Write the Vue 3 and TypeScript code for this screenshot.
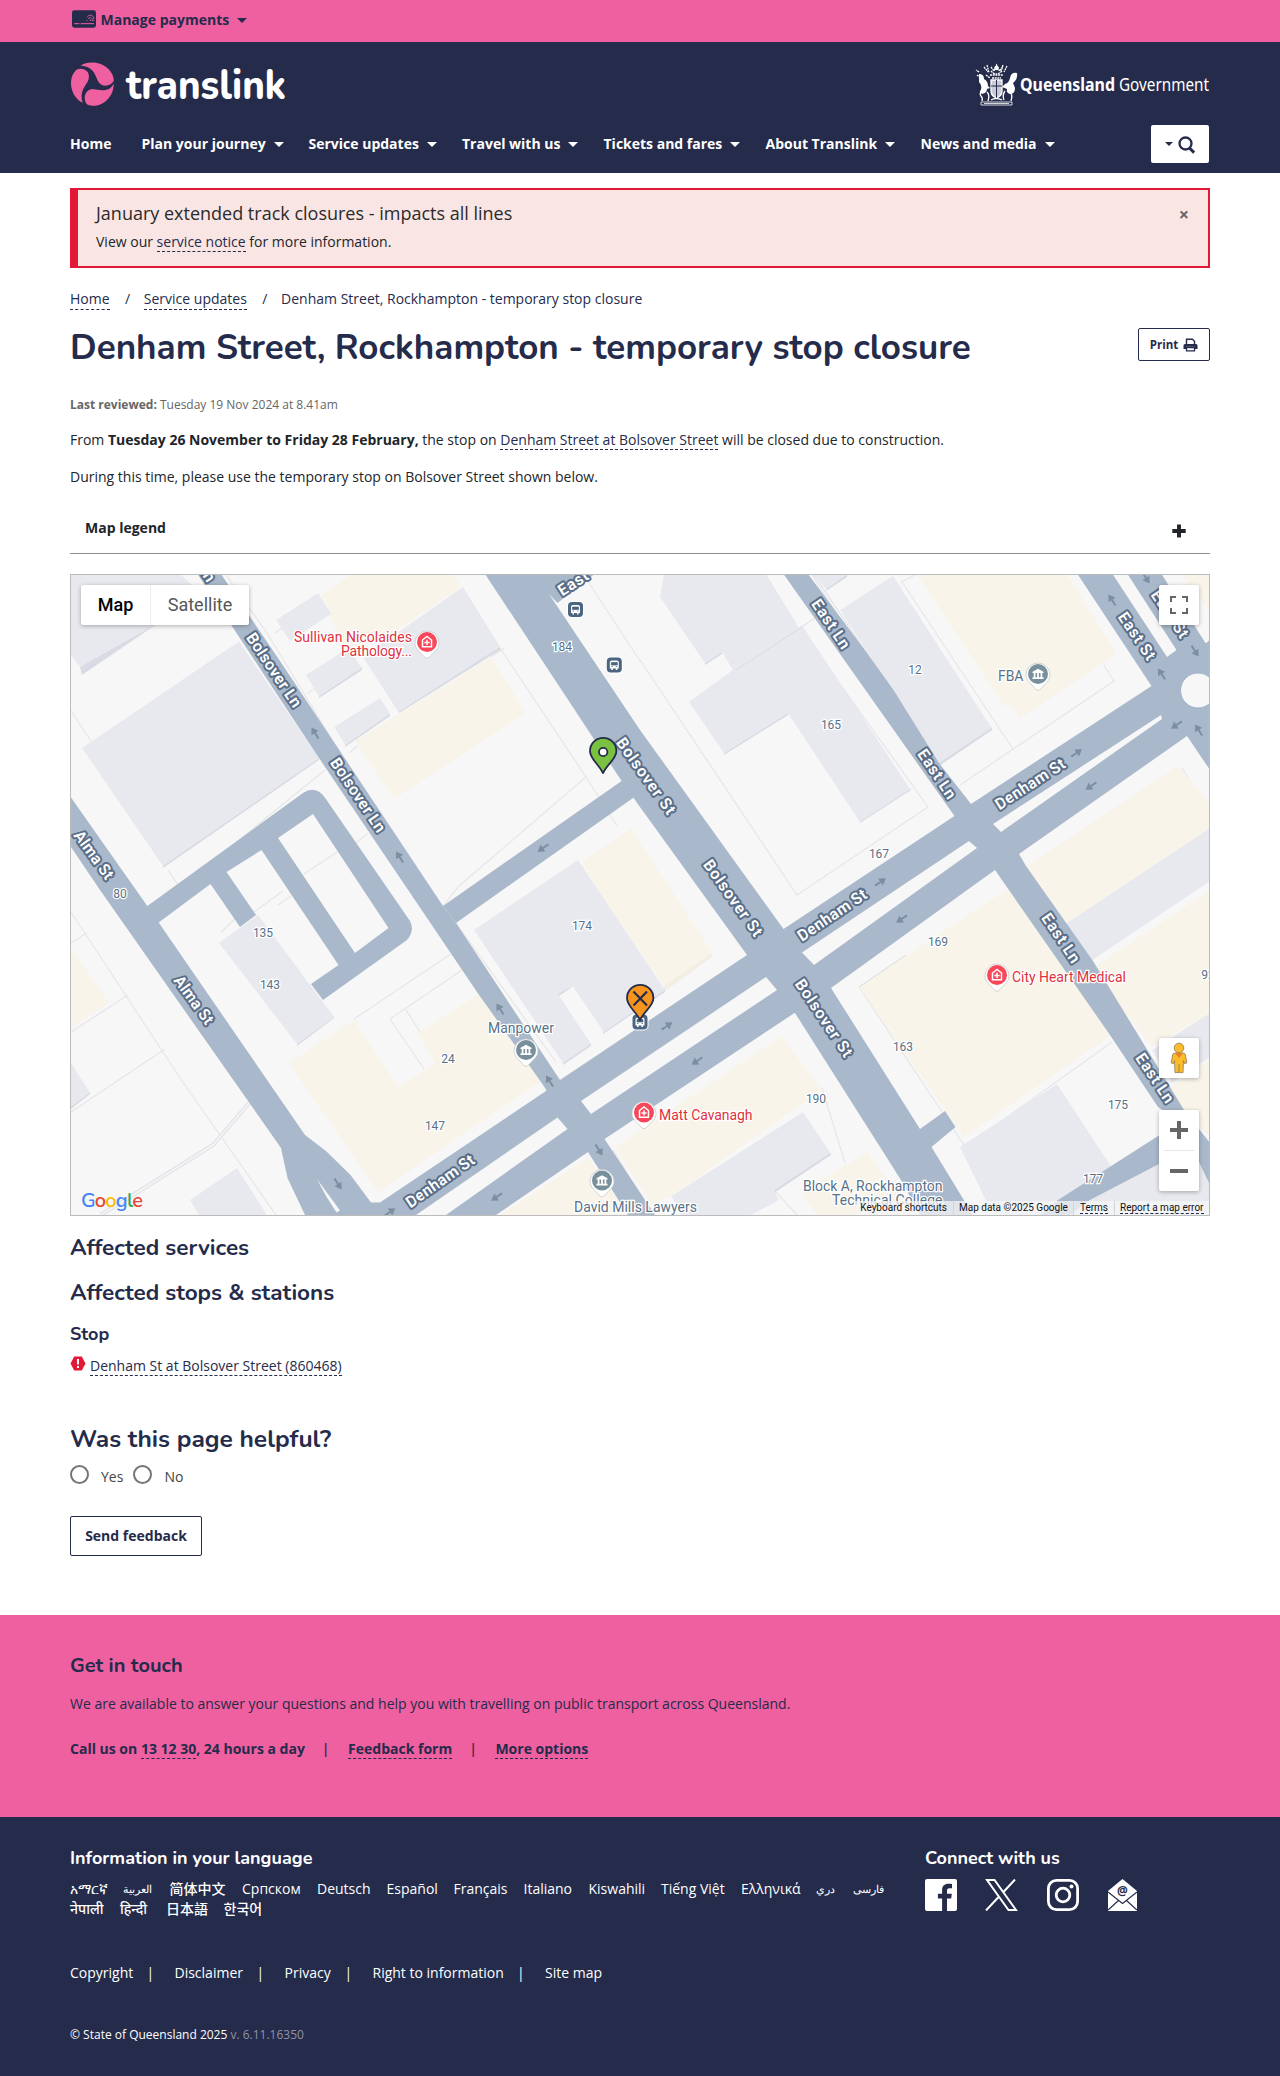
<script setup lang="ts">
interface MapLabel { text: string; x: number; y: number; a: number; w: number }
interface MapPoint { x: number; y: number }

const navItems: { label: string; menu: boolean; width: number }[] = [
  { label: 'Home', menu: false, width: 71.5 },
  { label: 'Plan your journey', menu: true, width: 167 },
  { label: 'Service updates', menu: true, width: 153.5 },
  { label: 'Travel with us', menu: true, width: 141.5 },
  { label: 'Tickets and fares', menu: true, width: 162 },
  { label: 'About Translink', menu: true, width: 155 },
  { label: 'News and media', menu: true, width: 150 },
]

const languageRows: { label: string; width: number; rtl?: boolean }[][] = [
  [
    { label: 'አማርኛ', width: 53 },
    { label: 'العربية', width: 46.5, rtl: true },
    { label: '简体中文', width: 72.5 },
    { label: 'Српском', width: 75 },
    { label: 'Deutsch', width: 69.5 },
    { label: 'Español', width: 67 },
    { label: 'Français', width: 70 },
    { label: 'Italiano', width: 65 },
    { label: 'Kiswahili', width: 72.5 },
    { label: 'Tiếng Việt', width: 80 },
    { label: 'Ελληνικά', width: 75 },
    { label: 'دري', width: 37, rtl: true },
    { label: 'فارسی', width: 40, rtl: true },
  ],
  [
    { label: 'नेपाली', width: 50 },
    { label: 'हिन्दी', width: 46 },
    { label: '日本語', width: 57.5 },
    { label: '한국어', width: 45 },
  ],
]

const roadLabels: MapLabel[] = [
  { text: 'Ln', x: 207, y: 573, a: 56, w: 17 },
  { text: 'Bolsover Ln', x: 274, y: 670, a: 56, w: 86 },
  { text: 'Bolsover Ln', x: 358, y: 795, a: 56, w: 86 },
  { text: 'Bolsover St', x: 646, y: 776, a: 54.5, w: 90 },
  { text: 'Bolsover St', x: 733, y: 898, a: 54.5, w: 90 },
  { text: 'Bolsover St', x: 824, y: 1018, a: 56, w: 90 },
  { text: 'Denham St', x: 1030, y: 784, a: -33, w: 80 },
  { text: 'Denham St', x: 832, y: 915, a: -34, w: 80 },
  { text: 'Denham St', x: 440, y: 1181, a: -35, w: 80 },
  { text: 'Alma St', x: 94, y: 855, a: 54, w: 56 },
  { text: 'Alma St', x: 194, y: 1000, a: 54, w: 56 },
  { text: 'East Ln', x: 831, y: 624, a: 56, w: 56 },
  { text: 'East Ln', x: 937, y: 774, a: 56, w: 56 },
  { text: 'East Ln', x: 1061, y: 938, a: 56, w: 56 },
  { text: 'East Ln', x: 1155, y: 1078, a: 56, w: 56 },
  { text: 'East St', x: 1137, y: 636, a: 56, w: 54 },
  { text: 'East St', x: 1170, y: 614, a: 56, w: 54 },
  { text: 'East', x: 573, y: 583, a: -33, w: 33 },
]

const houseNumbers: [string, number, number][] = [
  ['184', 562, 647], ['80', 120, 894], ['12', 915, 670], ['165', 831, 725], ['167', 879, 854],
  ['169', 938, 942], ['163', 903, 1047], ['190', 816, 1099], ['175', 1118, 1105], ['177', 1093, 1179],
  ['92', 1208, 975], ['174', 582, 926], ['135', 263, 933], ['143', 270, 985], ['24', 448, 1059], ['147', 435, 1126],
]

// Arrow headings: degrees clockwise from pointing right
const arrows: [number, number, number][] = [
  [315, 733, -123], [399.6, 857, -123], [543, 848, 146], [1112, 600, -123], [1146, 578, 57],
  [1195, 651, 57], [1161.6, 674, -123], [1176.5, 725, 146], [1198.6, 730, -123], [1076.6, 753, -34],
  [1091, 786, 146], [880.5, 882, -34], [901.6, 919, 146], [667, 1026, -34], [697, 1061, 146],
  [500, 1009, -123], [549.5, 1081, -123], [599, 1150, 57], [496.6, 1197, 146], [338, 1184, 57], [390, 1212, -34],
]

const medical: MapPoint[] = [{ x: 427, y: 642 }, { x: 997, y: 975 }, { x: 644, y: 1112.5 }]
const offices: MapPoint[] = [{ x: 1038, y: 674 }, { x: 526, y: 1050 }, { x: 602, y: 1180.5 }]
const busStops: MapPoint[] = [{ x: 575.5, y: 609.5 }, { x: 614.3, y: 665 }, { x: 640, y: 1022 }]
const footerLinks: { label: string; gap: number }[] = [
  { label: 'Copyright', gap: 76.5 }, { label: 'Disclaimer', gap: 82 }, { label: 'Privacy', gap: 60 },
  { label: 'Right to information', gap: 144.5 }, { label: 'Site map', gap: 0 },
]
</script>

<template>
  <div class="page">
    <div class="topbar">
      <div class="wrap row">
        <svg width="24" height="18" viewBox="0 0 72 54">
          <rect x="0" y="1" width="72" height="52" rx="7" fill="#252b4b" />
          <path d="M7 41H22M26 41H66" stroke="#ef60a0" stroke-width="3" />
          <g fill="none" stroke="#ef60a0" stroke-width="2.4">
            <path d="M45 22a11 11 0 0 1 21 5M48 27a7 8 0 0 1 13 2v4M53 30a3 3 0 0 1 4 3M45 30v3M65 29v4" />
          </g>
        </svg>
        <span class="manage">Manage payments</span>
        <i class="caret"></i>
      </div>
    </div>

    <header class="header">
      <div class="wrap brand">
        <svg width="220" height="46" viewBox="0 0 220 46">
          <g transform="translate(-10 -61.9) scale(0.3333)" fill="#ef60a0">
            <path d="M62 196C75 187 100 184 120 191C150 202 163 228 161 243C150 262 122 262 113 241C104 219 97 199 62 196Z" />
            <path d="M60 206C86 206 91 226 84 243C74 262 58 275 68 308C48 299 33 275 33 250C33 225 46 206 60 206Z" />
            <path d="M80 312C68 295 75 268 98 267C125 272 150 275 161 250C162 290 130 318 98 317C90 317 84 315 80 312Z" />
          </g>
          <text x="56" y="37" class="logo-text" textLength="160" lengthAdjust="spacingAndGlyphs">translink</text>
        </svg>
        <svg width="236" height="44" viewBox="0 0 236 44">
          <g fill="none" stroke="#fff" stroke-width="1.3">
            <path d="M17 17h11v11q0 5-5.5 7q-5.5-2-5.5-7z" fill="#c9cbd6" />
            <path d="M17 23h11M22.5 17v18" stroke="#252b4b" stroke-width="1" />
            <path d="M7 39h31v3H7zM10 40.500h25" stroke-width=".8" />
            <path d="M10 4l4 5M13 2l2 8M5 9l-3-2M33 3l-3 6M29 2l-2 7M17 8q5 6 11 0M17 4l3 4 2.500-6 3 6 3-4M16 12h13M18 15h9M3 12l4 3M12 12l4 3" stroke-dasharray="2 .7" />
            <path d="M8 27q-3 4-1 6t1 5M13 29q3 3 1 9M31 28q-3 4-1 9M36 29q3 3 1 9M17 37q5-3 11 0" />
          </g>
          <g fill="#fff">
            <path d="M5 11q5 0 5 5q4 2 4 7l2 2-3 1q0 4-5 5l-2-2q3-6-1-10z" />
            <path d="M43 10q-6-1-7 5q-1 5-5 6l-3 3 5 2q-1 4 3 5q5 0 5-6l-2-5q5-4 4-10z" />
            <circle cx="22.500" cy="5" r="2.200" />
          </g>
          <text x="46" y="28" class="gov bold" textLength="95" lengthAdjust="spacingAndGlyphs">Queensland</text>
          <text x="145" y="28" class="gov" textLength="90" lengthAdjust="spacingAndGlyphs">Government</text>
        </svg>
      </div>
      <nav class="wrap nav">
        <div v-for="n in navItems" :key="n.label" class="nav-item" :style="{ width: n.width + 'px' }">
          <span>{{ n.label }}</span><i v-if="n.menu" class="caret"></i>
        </div>
        <button class="search">
          <i class="caret"></i>
          <svg width="18" height="20" viewBox="0 0 18 20" fill="none" stroke="#252b4b" stroke-width="2.300">
            <circle cx="7.500" cy="9.500" r="6" /><path d="M11.500 14l4.600 4.600" stroke-width="3" />
          </svg>
        </button>
      </nav>
    </header>

    <main class="wrap">
      <section class="alert">
        <div>
          <h4>January extended track closures - impacts all lines</h4>
          <p>View our <a>service notice</a> for more information.</p>
        </div>
        <span class="close">×</span>
      </section>

      <div class="crumbs">
        <a>Home</a><i>/</i><a>Service updates</a><i>/</i><span>Denham Street, Rockhampton - temporary stop closure</span>
      </div>

      <div class="title-row">
        <h1>Denham Street, Rockhampton - temporary stop closure</h1>
        <button class="print">Print
          <svg width="15" height="14" viewBox="0 0 15 14">
            <path d="M3.500 7V1.200h6l2 2V7" fill="none" stroke="#252b4b" stroke-width="1.400" />
            <path d="M2 6h11q1.500 0 1.500 1.500V11H12V8.800H3V11H.500V7.500Q.500 6 2 6z" fill="#252b4b" />
            <path d="M3.500 9.500h8v3.300h-8z" fill="#fff" stroke="#252b4b" stroke-width="1.300" />
          </svg>
        </button>
      </div>

      <p class="reviewed"><b>Last reviewed:</b> Tuesday 19 Nov 2024 at 8.41am</p>
      <p class="para">From <b>Tuesday 26 November to Friday 28 February,</b> the stop on <a>Denham Street at Bolsover Street</a> will be closed due to construction.</p>
      <p class="para second">During this time, please use the temporary stop on Bolsover Street shown below.</p>

      <div class="legend">
        <b>Map legend</b>
        <svg width="14" height="14" viewBox="0 0 14 14"><path d="M7 .5v13M.300 7h13.400" stroke="#212529" stroke-width="3.900" /></svg>
      </div>

      <div class="map">
        <svg class="canvas" width="1138" height="640" viewBox="71 575 1138 640">
          <rect x="71" y="575" width="1138" height="640" fill="#f7f7f7" />

          <g fill="none" stroke="#e6e6e8" stroke-width="1.200">
            <path d="M71 711L91 741M226 575L267 633L439 915M440 910L459 886L586 777L500 648M491 657L504 648M586 777L617 826M640 660L797 895L928 807L800 628L815 618" />
            <path d="M71 912L180 1078L276 1215M71 943L87 933M71 1032L128 995M71 1112L165 1049M168 870L180 888L325 770M183 900L197 888M221 932L236 918" />
            <path d="M812 575L850 635M902 582L1013 749M960 785L1114 681L1104 665M901 582L915 575M587 580L640 661M275 633L290 622M308 693L322 684M349 753L362 742M304 874L337 852M278 905L304 887M355 844L368 833" />
            <path d="M354 1019L451 954M390 1019L462 970M390 1019L424 1069M406 1010L420 1032M456 923L556 1062M822 1088L845 1163M859 987L964 1145M1112 1042L964 1148M1112 888L1134 875M254 912L283 891" />
            <path d="M1182 768L1209 811M1197 1145L1209 1165M613 1150L652 1214M797 1215L774 1190" />
          </g>
          <path d="M101 1215L213 1145L251 1101" fill="none" stroke="#dcdde4" stroke-width="4" />
          <path d="M101 1215L213 1145L251 1101" fill="none" stroke="#f2f2f4" stroke-width="2.400" />

          <g fill="#d8dbe3">
            <path d="M80 667L82 675L157 624L155 617Z" />
            <path d="M788 713L724 753V755L788 715ZM910 789L860 821V823L911 790ZM705 663V665L722 654V651ZM939 762V766L992 730V727ZM826 589V591L847 577V574ZM500 646V650L399 713L398 711ZM334 1016L297 1044V1046L334 1018ZM603 1031V1034L665 992V988ZM563 1062V1065L591 1046V1043ZM319 696V698L362 670V667ZM345 745V747L390 716V713Z" />
            <path d="M90 1092L71 1106V1109L90 1094ZM830 1152L774 1190V1193L831 1155ZM557 994L572 985V987L559 996ZM163 865L319 758V760L163 868Z" />
          </g>
          <g fill="#f8f4e9">
            <path d="M321 595L352 574H453L461 587L397 630L345 650Z" />
            <path d="M491 657L525.500 713L394 799L355 741Z" />
            <path d="M582 862L632 828L640 843L712 952L665 988L598 890Z" />
            <path d="M917 574H1067L1116.500 654L1019 719L1011 705L1004 706Z" />
            <path d="M1182 574H1210V612Z" />
            <path d="M1025 867L1178 766L1210 803V828L1064 925Z" />
            <path d="M859 987L1006 890L1012 892L1110 1036L964 1137Z" />
            <path d="M1091 969L1210 890V1013L1152 1047Z" />
            <path d="M1168 1088L1210 1060V1136L1190 1120Z" />
            <path d="M615 1147L782 1036L821 1090L672 1196L652 1205Z" />
            <path d="M867.500 1152L899 1197L915 1215H817L801 1192Z" />
            <path d="M71 948L109 1003L71 1028Z" />
            <path d="M289 1063L354 1020L398.500 1087L435.500 1063L418 1033L483.500 991L541 1081L378 1192Z" />
            <path d="M500 1215L588 1158L628 1215Z" />
          </g>
          <path d="M665 985L712 953V957L665 991Z" fill="#f3eee2" />
          <g fill="#e8e9ee">
            <path d="M71 574H180L205 597L80 667L71 655Z" />
            <path d="M82 748L239 641.500L319 758L163 866Z" />
            <path d="M276 620L318 593L331 614L290 641Z" />
            <path d="M306 675L348.500 648L361.500 668L319 696Z" />
            <path d="M334.500 727L380 698L390 714L345 745Z" />
            <path d="M463 587L500 647L398.500 712L363 657Z" />
            <path d="M474 930L578 860L665 990L604 1032L572.500 986L558 994L591 1044L563 1063Z" />
            <path d="M664 574H766L799 628L803 627L910 789L860 822L788 713L724 753L689 702L733 670L722 652L705 663L660 597Z" />
            <path d="M840 610L893 576L991.500 728L939 763Z" />
            <path d="M814 574H847L826 589Z" />
            <path d="M1210 828L1064 925L1091 961L1210 881Z" />
            <path d="M1152 1050L1210 1013V1057L1172 1083Z" />
            <path d="M960 1147L1057 1084L1112 1168L1058 1200L1040 1215H993Z" />
            <path d="M1088 1200L1159 1164L1195 1150L1210 1175V1215H1070Z" />
            <path d="M803 1112L830.500 1153L774 1190L779 1200L751 1215H681L671.500 1196Z" />
            <path d="M71 1063L89.500 1092L71 1107Z" />
            <path d="M190 1200L237 1168L267 1215H199Z" />
            <path d="M219 943L258 915L334 1017L297 1044Z" />
          </g>
          <g fill="none" stroke="#d9dae1" stroke-width="1">
            <path d="M736 670L802 627M868 655L814 575M859 987L906 955M1064 925L1060 919" />
          </g>

          <g fill="#a9b8ca">
            <path d="M197.500 574H221L278 658L443 906L456 923L560 1080L604.500 1139L655 1215H628L588 1152L541 1082L477 992L319 758Z" />
            <path d="M621.600 781L443 906L456 923L633 798L640 790Z" />
            <path d="M485 574H594.500L557.500 603L549 594L640 730L783.500 929L831 988L920 1129L945 1111L955.500 1127L931.500 1147L973 1215H920L901 1180L795 1013L747 955L640 807L621.600 781Z" />
            <path d="M783.500 574H808L868.500 655L893.500 690L939 763L971 804L1019 854L1026 866L1093 961L1184 1110L1210 1143V1185L1190 1143L1159 1164L1088 1201L1070 1215H1040L1058 1200L1180 1122L1158 1107L1110 1035L995 870L954.500 816Z" />
            <path d="M1077.500 574H1161.500L1210 650V770L1187 736L1151.500 686Z" />
            <path d="M71 797.500L148 907L159 923L305 1135L326.500 1151.500L350.500 1175L371 1202.500H380L544.500 1092L560 1080L747 955L783.500 929L954.500 816L971 804L1151.500 686L1210 640V721L1187 736L1019 854L995 870L831 988L794.500 1013L604.500 1139L588 1152L496 1215H305L287.500 1178L281 1148L100 890L71 847Z" />
          </g>
          <path fill="#a9b8ca" fill-rule="evenodd" d="M146 907L208 862L303 793Q315 785 324.500 797L410 921Q415 931 407 940L323 1000L311 984L338.500 965L261.500 850L226.500 872L256 915L240 927L210.500 884L158 923ZM313 814L278 838L355 953L388.500 928Z" />
          <g fill="#f7f7f7">
            <path d="M1161 715L1162 719L1001 832L993 824Z" />
            <path d="M969 841L977 848L814 965L802 952.500Z" />
            <path d="M766 977L777 990L591 1114L581 1101Z" />
            <path d="M557.500 1117.500L567.500 1129L446 1215H416Z" />
            <path d="M1112.500 574H1127.500L1176.500 650L1167 657Z" />
            <path d="M317 1179L340 1210.500L336.500 1212.500L326 1196Z" />
            <circle cx="1198" cy="690.500" r="17.500" stroke="#9fb2c8" />
          </g>

          <g fill="#7b8fa0">
            <path v-for="(a, i) in arrows" :key="i" :transform="`translate(${a[0]} ${a[1]}) rotate(${a[2]})`" d="M-6.500 -1H0V-4.200L6.500 0L0 4.200V1H-6.500Z" />
          </g>

          <g class="road">
            <text v-for="(l, i) in roadLabels" :key="i" :textLength="l.w" y="5.500" :transform="`translate(${l.x} ${l.y}) rotate(${l.a})`">{{ l.text }}</text>
          </g>
          <g class="house">
            <text v-for="n in houseNumbers" :key="n[0]" :x="n[1]" :y="n[2] + 4">{{ n[0] }}</text>
          </g>

          <g v-for="(b, i) in busStops" :key="'b' + i" :transform="`translate(${b.x} ${b.y})`">
            <rect x="-8.500" y="-8.500" width="17" height="17" rx="5" fill="#fff" />
            <rect x="-7.500" y="-7.500" width="15" height="15" rx="4" fill="#4b6580" />
            <path d="M-4.500 -2.500q0-2 2-2h5q2 0 2 2V3.500h-1.500V5h-1.500V3.500h-3V5H-3V3.500h-1.500z" fill="#fff" />
            <path d="M-3 -2.500h6v2.500h-6zM-3 1.500h1.500M1.500 1.500H3" fill="#4b6580" stroke="#4b6580" stroke-width=".7" />
          </g>

          <g v-for="(p, i) in medical" :key="'m' + i" :transform="`translate(${p.x} ${p.y})`">
            <path d="M-12 1A12 12 0 1 1 12 1C12 7 7 9.500 3 14.500Q0 18 -3 14.500C-7 9.500 -12 7 -12 1Z" fill="#fff" stroke="#c6c9ce" stroke-width=".8" />
            <circle r="10" fill="#f9475a" />
            <path d="M-4.500 4.800V-2L0 -5.500L4.500 -2V4.800ZM0 -2.200V3M-2.600 .500H2.600" fill="none" stroke="#fff" stroke-width="1.500" />
          </g>
          <g v-for="(p, i) in offices" :key="'o' + i" :transform="`translate(${p.x} ${p.y})`">
            <path d="M-12 1A12 12 0 1 1 12 1C12 7 7 9.500 3 14.500Q0 18 -3 14.500C-7 9.500 -12 7 -12 1Z" fill="#fff" stroke="#c6c9ce" stroke-width=".8" />
            <circle r="10" fill="#78909c" />
            <path d="M-5.500 -2.300L0 -5.200L5.500 -2.300V-1H-5.500ZM-5.500 3.200H5.500V5H-5.500ZM-4.300 -1h1.800V3.200h-1.800zM-.900 -1H.900V3.200H-.900zM2.500 -1h1.800V3.200H2.500z" fill="#fff" />
          </g>

          <g class="poi red">
            <text x="294" y="642" textLength="118">Sullivan Nicolaides</text>
            <text x="341" y="656" textLength="71">Pathology...</text>
            <text x="1012" y="982" textLength="114">City Heart Medical</text>
            <text x="659" y="1120" textLength="93.500">Matt Cavanagh</text>
          </g>
          <g class="poi">
            <text x="998" y="681" textLength="25.500">FBA</text>
            <text x="488" y="1033" textLength="66">Manpower</text>
            <text x="574" y="1212" textLength="123">David Mills Lawyers</text>
            <text x="803" y="1191" textLength="139.500">Block A, Rockhampton</text>
            <text x="832" y="1205" textLength="110.500">Technical College</text>
          </g>

          <g stroke="#252b4b" stroke-width="1.800" stroke-linejoin="round">
            <path d="M603 773C598 763 590 759 590 751A13.200 13.200 0 0 1 616.400 751C616.400 759 608 763 603 773Z" fill="#7ac142" />
            <circle cx="603.200" cy="752" r="4.200" fill="#fff" />
            <path d="M640 1020C635 1010 627 1006 627 998A13.200 13.200 0 0 1 653.400 998C653.400 1006 645 1010 640 1020Z" fill="#f7941d" />
            <path d="M633.500 991.500L647 1005.500M647 991.500L633.500 1005.500" fill="none" stroke-width="2.200" />
          </g>
        </svg>

        <div class="maptype"><span class="on">Map</span><span>Satellite</span></div>
        <div class="ctl fullscreen">
          <svg width="18" height="18" viewBox="0 0 18 18" fill="none" stroke="#666" stroke-width="2"><path d="M1 6V1h5M12 1h5v5M17 12v5h-5M6 17H1v-5" /></svg>
        </div>
        <div class="ctl pegman">
          <svg width="20" height="32" viewBox="0 0 20 32">
            <g fill="#fbbc2c" stroke="#8d7a50" stroke-width=".8">
              <path d="M6 11h8q2 0 2.400 2l1.400 8-2.300.600-1-3-.500 12H6L5.500 18.600l-1 3L2.200 21l1.400-8Q4 11 6 11z" />
              <circle cx="10" cy="6" r="4.800" />
            </g>
            <path d="M6 11h8l-4 5z" fill="#e58226" /><path d="M10 22v8" stroke="#8d7a50" stroke-width=".8" />
          </svg>
        </div>
        <div class="ctl zoomer">
          <svg width="40" height="81" viewBox="0 0 40 81"><path d="M11 20h18M20 11v18M11 61h18" stroke="#666" stroke-width="4" /><path d="M5 40.500h30" stroke="#e6e6e6" /></svg>
        </div>
        <div class="google"><b>G</b><b>o</b><b>o</b><b>g</b><b>l</b><b>e</b></div>
        <div class="terms"><span>Keyboard shortcuts</span><span>Map data ©2025 Google</span><span><u>Terms</u></span><span><u>Report a map error</u></span></div>
      </div>

      <h2 class="aff">Affected services</h2>
      <h2 class="aff two">Affected stops &amp; stations</h2>
      <h3>Stop</h3>
      <div class="stop">
        <svg width="16" height="15" viewBox="0 0 16 15"><path d="M4.200 0.500h7.600L15.500 7.500l-3.700 7H4.200L.500 7.500z" fill="#e31837" /><path d="M8 3v5.500M8 10v2" stroke="#fff" stroke-width="2" /></svg>
        <a>Denham St at Bolsover Street (860468)</a>
      </div>

      <h2 class="helpful">Was this page helpful?</h2>
      <div class="radios"><i></i><span>Yes</span><i></i><span>No</span></div>
      <button class="send">Send feedback</button>
    </main>

    <section class="touch">
      <div class="wrap">
        <h2>Get in touch</h2>
        <p>We are available to answer your questions and help you with travelling on public transport across Queensland.</p>
        <div class="calls"><span>Call us on <a>13 12 30</a>, 24 hours a day</span><i>|</i><a>Feedback form</a><i>|</i><a>More options</a></div>
      </div>
    </section>

    <footer class="footer">
      <div class="wrap foot-top">
        <div class="langs">
          <h3>Information in your language</h3>
          <div v-for="(r, i) in languageRows" :key="i" class="lang-row">
            <span v-for="l in r" :key="l.label" :class="{ rtl: l.rtl }" :style="{ width: l.width + 'px' }">{{ l.label }}</span>
          </div>
        </div>
        <div class="connect">
          <h3>Connect with us</h3>
          <div class="social">
            <svg width="32" height="32" viewBox="0 0 32 32"><path fill="#fff" d="M2 0H30Q32 0 32 2V30Q32 32 30 32H22V19.500h4.200l.600-4.800H22v-3.100c0-1.400.400-2.300 2.400-2.300H27V5c-.400-.100-2-.200-3.700-.200-3.700 0-6.200 2.200-6.200 6.300v3.600h-4.200v4.800h4.200V32H2Q0 32 0 30V2Q0 0 2 0z" /></svg>
            <svg width="33" height="32" viewBox="0 0 33 32" fill="none" stroke="#fff" stroke-width="2"><path d="M2 1h7.500L31 31h-7.500zM1 31.500L14.500 17M30 .500L18 13.500" /></svg>
            <svg width="32" height="32" viewBox="0 0 32 32" fill="none" stroke="#fff" stroke-width="2.800"><rect x="1.400" y="1.400" width="29.200" height="29.200" rx="8" /><circle cx="16" cy="16" r="6.800" /><circle cx="24.500" cy="7.500" r="2" fill="#fff" stroke="none" /></svg>
            <svg width="29" height="32" viewBox="0 0 29 32"><path d="M0 12L14.500 0L29 12V32H0z" fill="#fff" /><path d="M0 13L14.500 24.500L29 13M0 31L10.500 21.500M29 31L18.500 21.500" fill="none" stroke="#252b4b" stroke-width="1.200" /><text x="14.500" y="16" class="at">@</text></svg>
          </div>
        </div>
      </div>
      <div class="wrap links">
        <template v-for="f in footerLinks" :key="f.label">
          <span class="link" :style="f.gap ? { width: f.gap + 'px' } : {}">{{ f.label }}</span><i v-if="f.gap">|</i>
        </template>
      </div>
      <div class="wrap copy">© State of Queensland 2025 <span>v. 6.11.16350</span></div>
    </footer>
  </div>
</template>

<style>
body { margin: 0; background: #fff; }
</style>

<style scoped>
.page { width: 1280px; height: 2076px; overflow: hidden; font: 14px/20px "Open Sans", "Noto Sans", "Noto Sans CJK SC", sans-serif; color: #212529; }
.page * { box-sizing: border-box; }
.page i { font-style: normal; }
.page svg { display: block; flex: none; }
h1, h2, h3, h4, p { margin: 0; white-space: nowrap; }
h1, h2, h3 { font-family: Nunito, Lato, "Open Sans", sans-serif; color: #252b4b; font-weight: 700; }
button { font: inherit; padding: 0; background: #fff; border: 1px solid #252b4b; border-radius: 2px; color: #252b4b; font-weight: 700; }
a { color: #252b4b; border-bottom: 1px dashed #252b4b; }
.wrap { width: 1140px; margin: 0 auto; }
.caret { display: inline-block; border: 5px solid transparent; border-top: 5px solid currentColor; border-bottom: 0; }

.topbar { height: 42px; background: #ef60a0; color: #252b4b; }
.row { display: flex; align-items: center; height: 40px; padding-left: 1.500px; }
.row svg { margin-top: -2px; }
.manage { font-weight: 700; margin: 0 8px 0 5px; }
.header { height: 131px; background: #252b4b; color: #fff; }
.brand { display: flex; justify-content: space-between; padding-top: 20px; height: 83px; }
.brand svg:last-child { margin-top: 1px; }
.logo-text { font: 800 41px Nunito, Lato, sans-serif; fill: #fff; }
.gov { font: 400 17.500px "Noto Sans", sans-serif; fill: #fff; }
.gov.bold { font-weight: 700; }
.nav { display: flex; align-items: center; height: 38px; font-weight: 700; }
.nav-item { display: flex; align-items: center; white-space: nowrap; }
.nav-item .caret { margin-left: 8px; }
.search { width: 58px; height: 38px; border: 0; margin-left: auto; margin-right: 1px; display: flex; align-items: center; justify-content: center; gap: 5px; }
.search .caret { border-width: 4.500px; border-bottom: 0; }

.alert { margin-top: 15px; height: 80px; background: #f9e5e3; border: 2px solid #e31837; border-left-width: 8px; padding: 11px 19px 0 18px; display: flex; justify-content: space-between; }
.alert h4 { font-weight: 400; font-size: 18px; line-height: 24px; color: #2b2b2b; }
.alert p { margin-top: 7px; }
.close { font-weight: 700; font-size: 18px; color: #666; line-height: 26px; }
.crumbs { display: flex; height: 24px; margin-top: 21px; align-items: flex-start; white-space: nowrap; color: #252b4b; }
.crumbs a, .crumbs span { line-height: 20px; }
.crumbs i { margin: 0 13.800px 0 15.300px; }
.title-row { display: flex; justify-content: space-between; margin-top: 15px; height: 62px; }
h1 { font-size: 35px; line-height: 40px; }
.print { width: 72px; height: 33px; font-size: 11.500px; font-weight: 700; display: flex; align-items: center; justify-content: center; gap: 5px; }
.reviewed { font-size: 12px; color: #666; height: 20px; margin-top: 5px; }
.para { margin-top: 15px; height: 20px; }
.para.second { margin-top: 17px; }
.legend { height: 67px; border-bottom: 1px solid #8b8d8f; padding: 0 24px 0 15px; display: flex; justify-content: space-between; align-items: center; }
.legend b { font-weight: 700; margin-top: 15px; }
.legend svg { margin-top: 21px; }

.map { position: relative; margin-top: 20px; height: 642px; border: 1px solid #bbb; overflow: hidden; font-family: Roboto, sans-serif; }
.road text { font: 600 16px Roboto, sans-serif; fill: #fff; stroke: #5a6e88; stroke-width: 4px; stroke-linejoin: round; paint-order: stroke; text-anchor: middle; }
.house text { font: 400 12px Roboto, sans-serif; fill: #5a7088; stroke: #fff; stroke-width: 2.500px; paint-order: stroke; text-anchor: middle; }
.poi text { font: 400 14px Roboto, sans-serif; fill: #587189; stroke: #fff; stroke-width: 2.500px; paint-order: stroke; }
.poi.red text { fill: #e0303e; }
.maptype { position: absolute; left: 10px; top: 10px; height: 40px; display: flex; background: #fff; border-radius: 2px; box-shadow: 0 1px 4px rgba(0,0,0,.3); font-size: 18px; line-height: 40px; color: #565656; }
.maptype span { width: 98px; text-align: center; }
.maptype .on { width: 70px; font-weight: 500; color: #000; border-right: 1px solid #eee; }
.ctl { position: absolute; right: 10px; width: 40px; height: 40px; background: #fff; border-radius: 2px; box-shadow: 0 1px 4px rgba(0,0,0,.3); display: flex; align-items: center; justify-content: center; }
.fullscreen { top: 10px; }
.pegman { top: 463px; }
.zoomer { top: 535px; height: 81px; }
.google { position: absolute; left: 10px; bottom: 2px; font: 500 20px/24px Nunito, "Open Sans", sans-serif; letter-spacing: -.8px; }
.google b { font-weight: 600; color: #4285f4; }
.google b:nth-child(2), .google b:nth-child(6) { color: #ea4335; }
.google b:nth-child(3) { color: #fbbc05; }
.google b:nth-child(5) { color: #34a853; }
.terms { position: absolute; right: 0; bottom: 0; display: flex; font-size: 10px; line-height: 14px; height: 14px; color: #111; white-space: nowrap; }
.terms span { background: rgba(245,245,245,.75); padding: 0 5.500px; border-left: 1px solid #cfd6de; }
.terms span:first-child { border: 0; }
.terms u { text-decoration: none; border-bottom: 1px dashed #252b4b; display: inline-block; height: 13px; }

.aff { font-size: 22.500px; line-height: 28px; margin-top: 18px; }
.aff.two { margin-top: 17px; }
h3 { font-size: 18px; line-height: 22px; margin-top: 16px; }
.stop { display: flex; height: 22px; margin-top: 11px; }
.stop svg { margin: 0 4px 0 0; }
.stop a { height: 20px; line-height: 20px; }
.helpful { font-size: 24.500px; line-height: 32px; margin-top: 45px; }
.radios { display: flex; height: 22px; margin-top: 9px; }
.radios i { width: 19px; height: 19px; border: 2px solid #757575; border-radius: 50%; margin-top: 1px; }
.radios span { margin: 3px 10px 0 12px; color: #444; }
.send { display: block; width: 132px; height: 40px; margin-top: 30px; }

.touch { height: 202px; margin-top: 59px; background: #ef60a0; color: #252b4b; padding-top: 37px; }
.touch h2 { font-size: 20px; line-height: 28px; font-weight: 700; }
.touch p { margin-top: 14px; }
.calls { display: flex; margin-top: 25px; font-weight: 700; height: 20px; }
.calls i { margin: 0 18.500px 0 17px; font-weight: 600; }
.footer { height: 259px; background: #252b4b; color: #fff; padding-top: 30px; font-weight: 500; }
.footer h3 { color: #fff; margin: 0 0 10px; font-size: 18px; }
.foot-top { display: flex; height: 116px; }
.langs { width: 855px; }
.lang-row { display: flex; height: 20px; white-space: nowrap; }
.lang-row .rtl { font-size: 11px; font-weight: 400; }
.social { display: flex; gap: 28px; }
.social svg:nth-child(3) { margin-left: 1px; }
.social svg:nth-child(4) { margin-left: .500px; }
.at { font: 700 12px "Open Sans", sans-serif; text-anchor: middle; fill: #252b4b; }
.links { display: flex; height: 20px; white-space: nowrap; }
.links i { width: 28px; }
.copy { margin-top: 42px; font-size: 12px; }
.copy span { color: #8f93a5; }
</style>
